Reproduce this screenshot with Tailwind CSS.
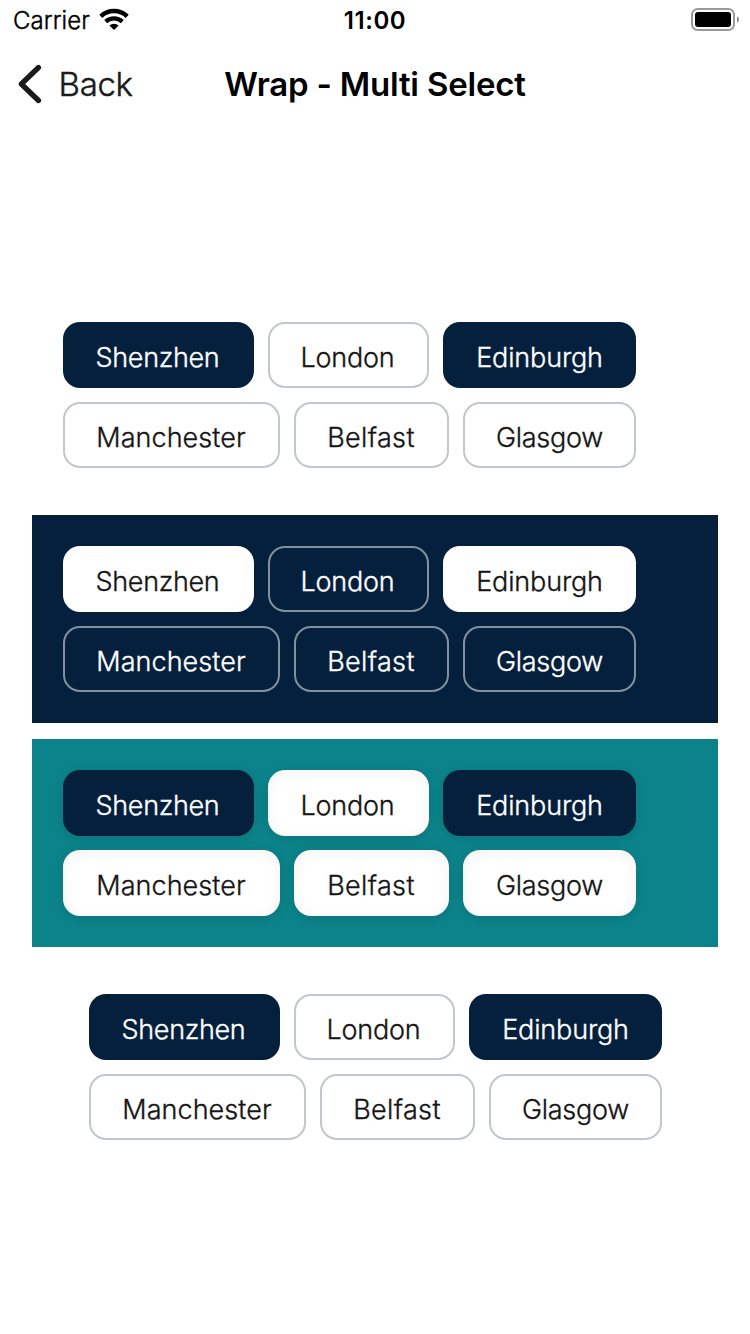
<!DOCTYPE html>
<html lang="en">
<head>
<meta charset="utf-8">
<title>Wrap - Multi Select</title>
<script src="https://cdn.jsdelivr.net/npm/@tailwindcss/browser@4"></script>
</head>
<body class="w-[750px] h-[1334px] overflow-hidden bg-white font-['Inter',sans-serif] text-[#151515] flex flex-col">

<!-- Status bar -->
<div class="h-10 grid grid-cols-3 items-center text-black text-[24px] leading-[42px] whitespace-nowrap">
  <div class="flex items-center pl-[13px]">
    <span class="font-light tracking-[0.05px] [-webkit-text-stroke:0.4px_currentColor]">Carrier</span>
    <svg class="ml-[9.500px] mb-[4px] w-[31px] h-[24px]" viewBox="0 0 31 24" fill="none" stroke="#000">
      <path d="M1.8 9.3 A19.2 19.2 0 0 1 28.2 9.3" stroke-width="4.4"/>
      <path d="M6.7 14.6 A12.3 12.3 0 0 1 23.3 14.6" stroke-width="4.2"/>
      <path d="M10.4 18.6 A6.8 6.8 0 0 1 19.6 18.6 L15 23 Z" fill="#000" stroke="none"/>
    </svg>
  </div>
  <div class="text-center font-semibold tracking-[0.6px]">11:00</div>
  <div class="flex items-center justify-end pr-[11px]">
    <svg class="mb-[2px] w-[49px] h-[24px]" viewBox="0 0 49 24">
      <rect x="2" y="1" width="42" height="21" rx="5.5" fill="none" stroke="#9b9b9b" stroke-width="2"/>
      <rect x="5" y="4" width="36" height="15" rx="3" fill="#000"/>
      <path d="M47 8.2 Q49 9.3 49 11.5 Q49 13.700 47 14.800 Z" fill="#8a8a8a"/>
    </svg>
  </div>
</div>

<!-- Navigation bar -->
<div class="h-[88px] grid grid-cols-[200px_350px_200px] items-center text-[33px] leading-[88px] whitespace-nowrap">
  <div class="flex items-center pl-[18px]">
    <svg class="w-[24px] h-[40px]" viewBox="0 0 24 40" fill="none" stroke="#1a1a1c" stroke-width="5.2" stroke-linecap="round" stroke-linejoin="round"><path d="M20.500 3.500 L3.300 20 L20.500 36.500"/></svg>
    <span class="ml-[16.500px] font-light tracking-[-0.3px] text-[#1a1a1c] [-webkit-text-stroke:0.5px_currentColor]">Back</span>
  </div>
  <div class="text-center font-semibold tracking-[-0.2px] text-black">Wrap - Multi Select</div>
</div>

<!-- Chip groups -->
<main class="mt-[163px] mx-8 flex flex-col gap-4 text-[27px] leading-[68px] font-light text-center whitespace-nowrap [-webkit-text-stroke:0.35px_currentColor]">
  <section class="h-52 pl-[31px] pt-[31px] flex flex-col gap-[14px]">
    <div class="flex gap-[14px]">
      <div class="w-[191px] h-[66px] rounded-[17px] pt-[2px] pr-[2px] bg-[#05203c] text-white tracking-[-0.35px]">Shenzhen</div>
      <div class="w-[161px] h-[66px] rounded-[17px] border-2 border-[#c1c7cb] pr-[2px] tracking-[-0.2px]">London</div>
      <div class="w-[193px] h-[66px] rounded-[17px] pt-[2px] bg-[#05203c] text-white tracking-[-0.15px]">Edinburgh</div>
    </div>
    <div class="flex gap-[14px]">
      <div class="w-[217px] h-[66px] rounded-[17px] border-2 border-[#c1c7cb] pr-px tracking-[0.05px]">Manchester</div>
      <div class="w-[155px] h-[66px] rounded-[17px] border-2 border-[#c1c7cb] pr-px tracking-[0.35px]">Belfast</div>
      <div class="w-[173px] h-[66px] rounded-[17px] border-2 border-[#c1c7cb] tracking-[-0.25px]">Glasgow</div>
    </div>
  </section>

  <section class="h-52 pl-[31px] pt-[31px] flex flex-col gap-[14px] bg-[#05203c] text-white">
    <div class="flex gap-[14px]">
      <div class="w-[191px] h-[66px] rounded-[17px] pt-[2px] pr-[2px] bg-white text-[#151515] tracking-[-0.35px]">Shenzhen</div>
      <div class="w-[161px] h-[66px] rounded-[17px] border-2 border-white/50 pr-[2px] tracking-[-0.2px]">London</div>
      <div class="w-[193px] h-[66px] rounded-[17px] pt-[2px] bg-white text-[#151515] tracking-[-0.15px]">Edinburgh</div>
    </div>
    <div class="flex gap-[14px]">
      <div class="w-[217px] h-[66px] rounded-[17px] border-2 border-white/50 pr-px tracking-[0.05px]">Manchester</div>
      <div class="w-[155px] h-[66px] rounded-[17px] border-2 border-white/50 pr-px tracking-[0.35px]">Belfast</div>
      <div class="w-[173px] h-[66px] rounded-[17px] border-2 border-white/50 tracking-[-0.25px]">Glasgow</div>
    </div>
  </section>

  <section class="h-52 pl-[31px] pt-[31px] flex flex-col gap-[14px] bg-[#0c838a]">
    <div class="flex gap-[14px]">
      <div class="w-[191px] h-[66px] rounded-[17px] pt-[2px] pr-[2px] bg-[#05203c] text-white tracking-[-0.35px] shadow-[0_2px_12px_rgba(0,0,0,0.12)]">Shenzhen</div>
      <div class="w-[161px] h-[66px] rounded-[17px] pt-[2px] pr-[2px] bg-white tracking-[-0.2px] shadow-[0_2px_12px_rgba(0,0,0,0.12),inset_0_2px_16px_rgba(0,0,0,0.05)]">London</div>
      <div class="w-[193px] h-[66px] rounded-[17px] pt-[2px] bg-[#05203c] text-white tracking-[-0.15px] shadow-[0_2px_12px_rgba(0,0,0,0.12)]">Edinburgh</div>
    </div>
    <div class="flex gap-[14px]">
      <div class="w-[217px] h-[66px] rounded-[17px] pt-[2px] pr-px bg-white tracking-[0.05px] shadow-[0_2px_12px_rgba(0,0,0,0.12),inset_0_2px_16px_rgba(0,0,0,0.05)]">Manchester</div>
      <div class="w-[155px] h-[66px] rounded-[17px] pt-[2px] pr-px bg-white tracking-[0.35px] shadow-[0_2px_12px_rgba(0,0,0,0.12),inset_0_2px_16px_rgba(0,0,0,0.05)]">Belfast</div>
      <div class="w-[173px] h-[66px] rounded-[17px] pt-[2px] bg-white tracking-[-0.25px] shadow-[0_2px_12px_rgba(0,0,0,0.12),inset_0_2px_16px_rgba(0,0,0,0.05)]">Glasgow</div>
    </div>
  </section>

  <section class="h-52 pl-[57px] pt-[31px] flex flex-col gap-[14px]">
    <div class="flex gap-[14px]">
      <div class="w-[191px] h-[66px] rounded-[17px] pt-[2px] pr-[2px] bg-[#05203c] text-white tracking-[-0.35px]">Shenzhen</div>
      <div class="w-[161px] h-[66px] rounded-[17px] border-2 border-[#c1c7cb] pr-[2px] tracking-[-0.2px]">London</div>
      <div class="w-[193px] h-[66px] rounded-[17px] pt-[2px] bg-[#05203c] text-white tracking-[-0.15px]">Edinburgh</div>
    </div>
    <div class="flex gap-[14px]">
      <div class="w-[217px] h-[66px] rounded-[17px] border-2 border-[#c1c7cb] pr-px tracking-[0.05px]">Manchester</div>
      <div class="w-[155px] h-[66px] rounded-[17px] border-2 border-[#c1c7cb] pr-px tracking-[0.35px]">Belfast</div>
      <div class="w-[173px] h-[66px] rounded-[17px] border-2 border-[#c1c7cb] tracking-[-0.25px]">Glasgow</div>
    </div>
  </section>
</main>
</body>
</html>
